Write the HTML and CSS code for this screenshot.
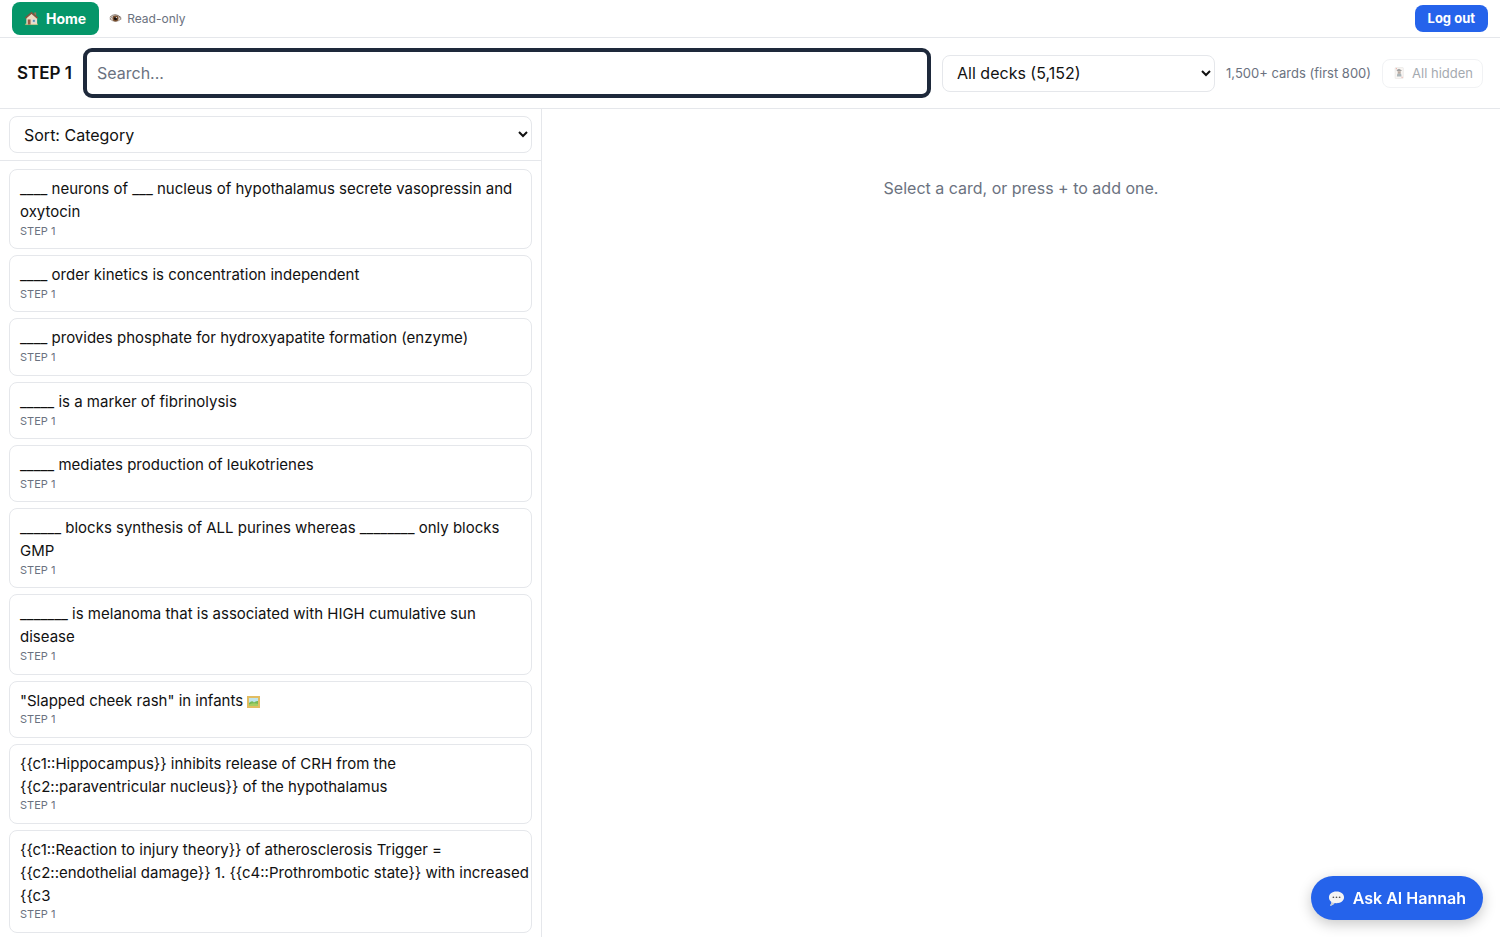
FILE: index.html
```
<!DOCTYPE html>
<html lang="en">
<head>
<meta charset="utf-8">
<meta name="viewport" content="width=device-width, initial-scale=1">
<title>STEP 1 cards</title>
<link rel="stylesheet" href="styles.css">
</head>
<body>
<header class="topbar">
  <a class="home" href="#">
    <svg class="icon-home" viewBox="0 0 16 16" aria-hidden="true"><path fill="#8fae62" d="M1 13.500h14V15H1z"/><path fill="#ecdcc4" d="M2.500 7 8 2.500 14 7v7.500H2.500z"/><path fill="#a0705a" d="M11 1.500h2V5h-2z"/><path fill="none" stroke="#80543f" stroke-width="1.800" d="M1.500 7.500 8 2l6.500 5.500"/><path fill="#9b5b44" d="M4 9h3v5.500H4z"/><path fill="#5c91b5" stroke="#fff" stroke-width=".5" d="M9 9h3v3H9z"/></svg>
    <span>Home</span>
  </a>
  <span class="mode">
    <svg class="icon-eye" viewBox="0 0 16 16" aria-hidden="true"><path fill="#eee6df" stroke="#8b7a70" stroke-width="1" d="M1 8.500Q8 1.500 15 8.500 8 14.500 1 8.500z"/><path fill="none" stroke="#75665c" stroke-width="1.200" d="M1 6.500Q7.500 0 15 7"/><circle cx="8" cy="8" r="3.700" fill="#79502f"/><circle cx="8" cy="8" r="2" fill="#160f0c"/><circle cx="9" cy="6.800" r=".8" fill="#fff"/></svg>
    <span>Read-only</span>
  </span>
  <button class="logout" type="button">Log out</button>
</header>
<section class="toolbar">
  <h1 class="title">STEP 1</h1>
  <input class="search" type="search" placeholder="Search..." aria-label="Search cards">
  <select class="select deck" aria-label="Deck"><option>All decks (5,152)</option></select>
  <span class="count">1,500+ cards (first 800)</span>
  <button class="hidden-toggle" type="button" disabled>
    <svg class="icon-joker" viewBox="0 0 14 14" aria-hidden="true"><rect x="2.500" y=".5" width="9.500" height="13" rx="1" fill="#f4efe9" stroke="#c9c3bd" stroke-width=".6"/><path fill="#444" d="M4 3.500 7 2l3.500 2L9 5H5z"/><path fill="#775947" d="M5.500 5h3.500v3H5.500z"/><path fill="#5c7077" d="M5 8h4.500l.5 3H4.500z"/><path fill="#d35b50" d="M3.300 1.300h1.200v1.200H3.300zM10 11.500h1.200v1.200H10z"/></svg>
    <span>All hidden</span>
  </button>
</section>
<main class="main">
  <aside class="sidebar">
    <div class="sortbar"><select class="select sort" aria-label="Sort cards"><option>Sort: Category</option></select></div>
    <ul class="cards">
      <li class="card"><p class="text">____ neurons of ___ nucleus of hypothalamus secrete vasopressin and oxytocin</p><p class="deckname">STEP 1</p></li>
      <li class="card"><p class="text">____ order kinetics is concentration independent</p><p class="deckname">STEP 1</p></li>
      <li class="card"><p class="text">____ provides phosphate for hydroxyapatite formation (enzyme)</p><p class="deckname">STEP 1</p></li>
      <li class="card"><p class="text">_____ is a marker of fibrinolysis</p><p class="deckname">STEP 1</p></li>
      <li class="card"><p class="text">_____ mediates production of leukotrienes</p><p class="deckname">STEP 1</p></li>
      <li class="card"><p class="text">______ blocks synthesis of ALL purines whereas ________ only blocks GMP</p><p class="deckname">STEP 1</p></li>
      <li class="card"><p class="text">_______ is melanoma that is associated with HIGH cumulative sun disease</p><p class="deckname">STEP 1</p></li>
      <li class="card"><p class="text">"Slapped cheek rash" in infants <svg class="icon-picture" viewBox="0 0 13 12" role="img" aria-label="Has image"><path fill="#e2bd62" d="M0 0h13v12H0z"/><path fill="#bfe5ee" d="M2 2h9v8H2z"/><path fill="#76b957" d="M2 7q3-3 5-.5Q9 4.500 11 5v5H2z"/><path fill="#a5ce62" d="M2 8.500Q7 6.500 11 8v2H2z"/></svg></p><p class="deckname">STEP 1</p></li>
      <li class="card"><p class="text">{{c1::Hippocampus}} inhibits release of CRH from the {{c2::paraventricular nucleus}} of the hypothalamus</p><p class="deckname">STEP 1</p></li>
      <li class="card"><p class="text">{{c1::Reaction to injury theory}} of atherosclerosis Trigger = {{c2::endothelial damage}} 1. {{c4::Prothrombotic state}} with increased {{c3</p><p class="deckname">STEP 1</p></li>
    </ul>
  </aside>
  <section class="detail"><p class="empty">Select a card, or press + to add one.</p></section>
</main>
<button class="ask" type="button">
  <svg class="icon-chat" viewBox="0 0 18 18" aria-hidden="true"><path fill="#f4f4f4" d="M9 1.500c4.800 0 8 2.600 8 6.200s-3.200 6.200-8 6.200l-2-.2C5.500 15.500 4 16.500 2 16.500c1-1 1.600-2.200 1.600-3.800C2 11.500 1 9.800 1 7.700c0-3.600 3.200-6.200 8-6.200z"/><path fill="#c9ced4" d="M3.600 12.700C5 13.600 8 14 11 13.600L7 13.700C5.500 15.500 4 16.500 2 16.500c1-1 1.600-2.200 1.600-3.800z"/><circle cx="5.700" cy="7.700" r=".9" fill="#555"/><circle cx="9" cy="7.700" r=".9" fill="#555"/><circle cx="12.300" cy="7.700" r=".9" fill="#555"/></svg>
  <span>Ask AI Hannah</span>
</button>
</body>
</html>
```
FILE: styles.css
```
* { box-sizing: border-box; }
body {
  margin: 0;
  height: 100vh;
  display: flex;
  flex-direction: column;
  overflow: hidden;
  background: #fff;
  color: #111;
  font-family: Inter, "Liberation Sans", sans-serif;
}
button, input, select { font-family: inherit; }
p, ul, h1 { margin: 0; padding: 0; }
.topbar {
  display: flex;
  align-items: center;
  flex: none;
  gap: 10px;
  padding: 2px 12px;
  border-bottom: 1px solid #e5e7eb;
}
.home {
  display: flex;
  align-items: center;
  gap: 7px;
  padding: 7px 13px 7px 12px;
  border-radius: 8px;
  background: #059669;
  color: #fff;
  font-size: 14px;
  line-height: 19px;
  font-weight: 700;
  text-decoration: none;
}
.icon-home { width: 15px; height: 15px; }
.mode {
  display: flex;
  align-items: center;
  gap: 5px;
  color: #6b7280;
  font-size: 12px;
}
.icon-eye { width: 13px; height: 13px; }
.logout {
  margin-left: auto;
  padding: 5px 13px;
  border: 0;
  border-radius: 8px;
  background: #2563eb;
  color: #fff;
  font-size: 13px;
  line-height: 17px;
  font-weight: 700;
}
.toolbar {
  display: flex;
  align-items: center;
  flex: none;
  gap: 11px;
  padding: 10px 17px;
  border-bottom: 1px solid #e5e7eb;
}
.title { font-size: 17px; line-height: 20px; font-weight: 600; white-space: nowrap; }
.search {
  flex: 1;
  min-width: 0;
  height: 50px;
  padding: 0 10px;
  border: 4px solid #1e293b;
  border-radius: 9px;
  background: #fff;
  font-size: 16px;
  outline: none;
}
.search::placeholder { color: #6b7280; }
.select {
  height: 37px;
  padding: 0 10px;
  border: 1px solid #e5e7eb;
  border-radius: 8px;
  background: #fff;
  color: #111;
  font-size: 16px;
}
.deck { width: 273px; }
.count { color: #6b7280; font-size: 13px; white-space: nowrap; }
.hidden-toggle {
  display: flex;
  align-items: center;
  gap: 6px;
  padding: 5px 9px;
  border: 1px solid #e5e7eb;
  border-radius: 8px;
  background: #fff;
  color: #4b5563;
  font-size: 13px;
  line-height: 17px;
  white-space: nowrap;
  opacity: .5;
}
.icon-joker { width: 14px; height: 12px; }
.main { display: flex; flex: 1; min-height: 0; }
.sidebar {
  display: flex;
  flex-direction: column;
  flex: none;
  width: 542px;
  border-right: 1px solid #e5e7eb;
}
.sortbar { padding: 7px 9px; border-bottom: 1px solid #e5e7eb; }
.sort { display: block; width: 100%; }
.cards {
  display: flex;
  flex-direction: column;
  flex: 1;
  gap: 6px;
  min-height: 0;
  padding: 8px 9px;
  overflow: hidden;
  list-style: none;
}
.card {
  flex: none;
  padding: 8px 0 10px 10px;
  border: 1px solid #e5e7eb;
  border-radius: 8px;
}
.text { font-size: 15px; line-height: 1.52; }
.icon-picture { width: 13px; height: 12px; vertical-align: -2px; }
.deckname { color: #6b7280; font-size: 11px; line-height: 1.32; }
.detail { flex: 1; padding: 67px 24px; text-align: center; }
.empty { color: #6b7280; font-size: 16px; line-height: 24px; }
.ask {
  position: fixed;
  right: 17px;
  bottom: 17px;
  display: flex;
  align-items: center;
  gap: 8px;
  padding: 12px 17px;
  border: 0;
  border-radius: 22px;
  background: #2563eb;
  box-shadow: 0 4px 14px rgba(0, 0, 0, .22);
  color: #fff;
  font-size: 16px;
  line-height: 20px;
  font-weight: 600;
}
.icon-chat { width: 17px; height: 17px; }
```
